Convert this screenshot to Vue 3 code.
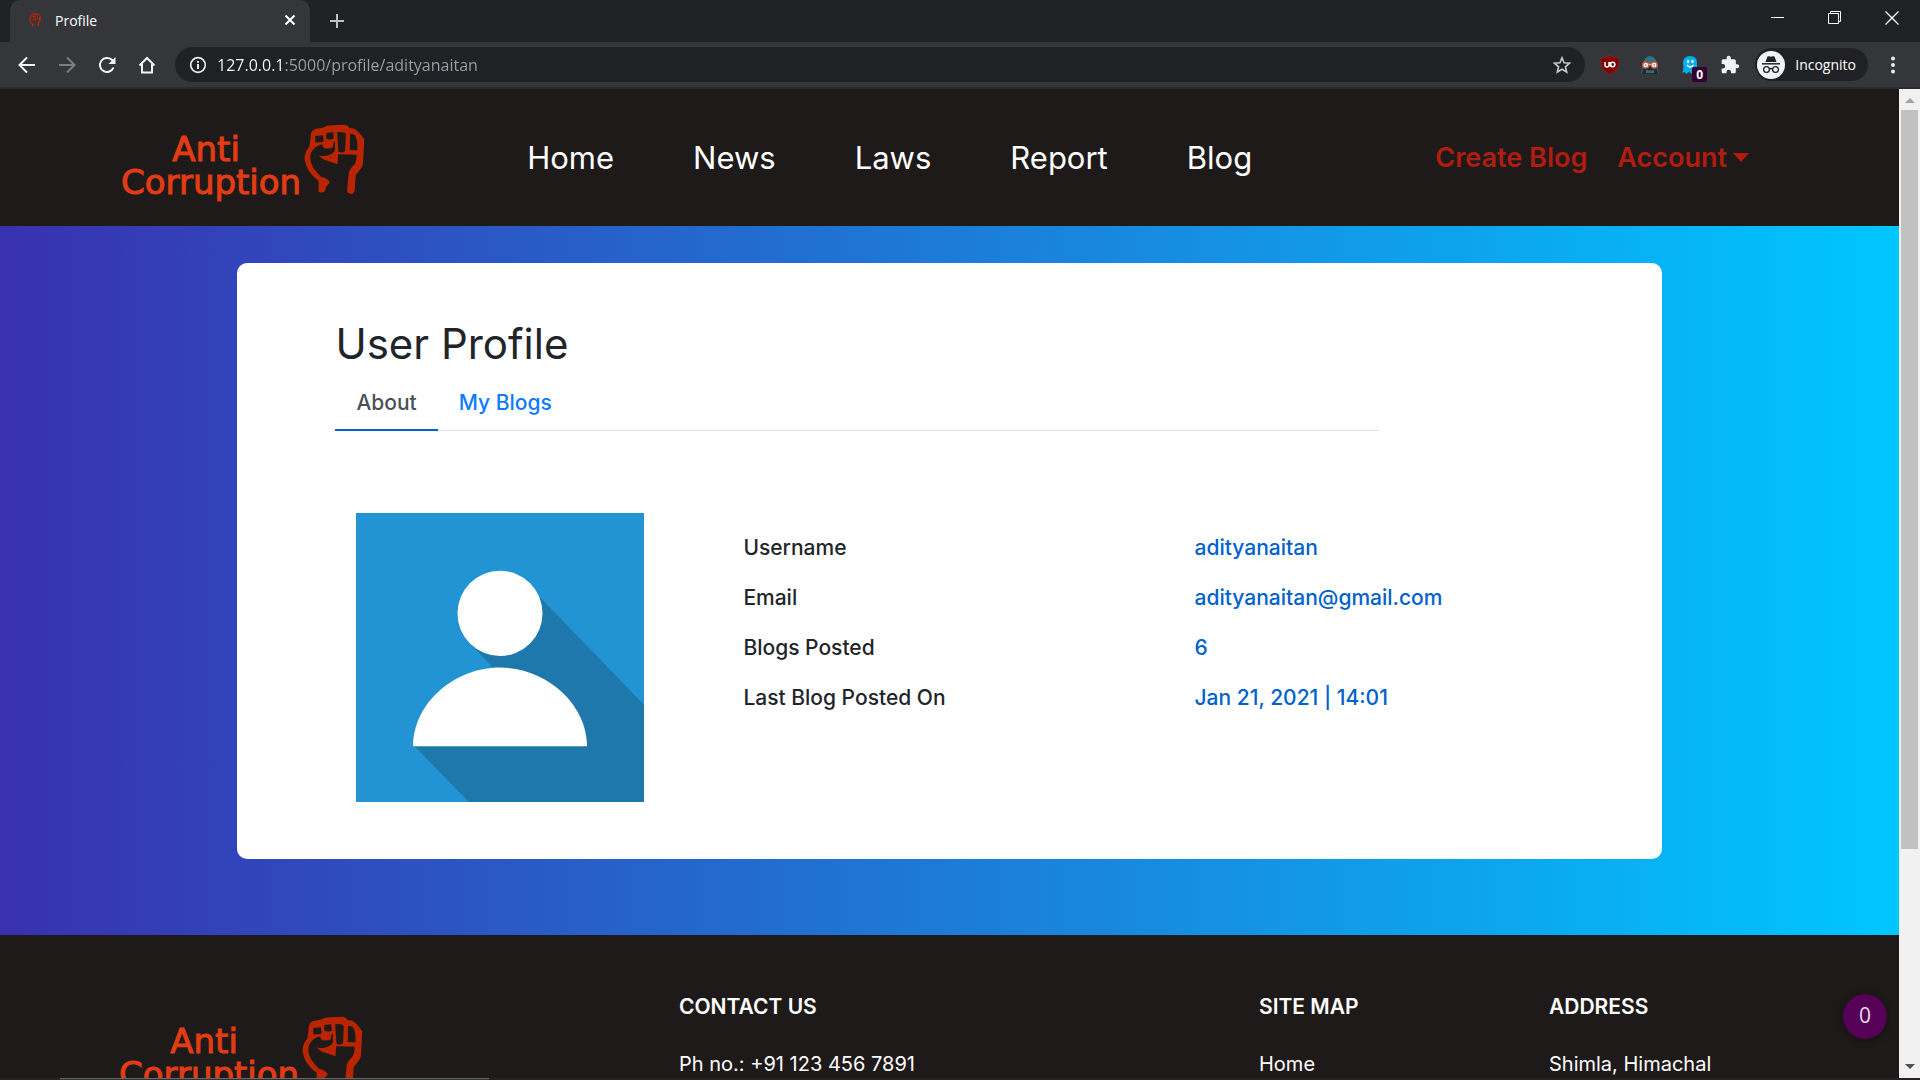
<script setup>
import { ref, h } from 'vue'

const url = ref('127.0.0.1:5000/profile/adityanaitan')
const links = ['Home', 'News', 'Laws', 'Report', 'Blog']
const details = [
  { label: 'Username', value: 'adityanaitan' },
  { label: 'Email', value: 'adityanaitan@gmail.com' },
  { label: 'Blogs Posted', value: '6' },
  { label: 'Last Blog Posted On', value: 'Jan 21, 2021 | 14:01' },
]
const footerColumns = [
  { title: 'CONTACT US', text: 'Ph no.: +91 123 456 7891' },
  { title: 'SITE MAP', text: 'Home', link: true },
  { title: 'ADDRESS', text: 'Shimla, Himachal' },
]

const Fist = (props) =>
  h('svg', { viewBox: '614 72 184 214', 'aria-hidden': 'true' }, [
    h('path', {
      fill: '#b82500',
      'fill-rule': 'evenodd',
      d: 'M634 110 Q634 90 650 86 L670 83 Q684 75 700 76 L738 74 Q746 75 752 84 L766 86 Q778 92 796 118 L792 192 Q790 204 770 226 L767 272 Q765 283 755 283 Q744 282 744 272 L749 218 Q752 208 766 194 Q772 188 773 165 L717 163 L715 193 L684 183 Q664 176 659 166 Q668 170 682 168 Q702 162 707 152 L707 124 Q702 128 702 134 Q704 144 694 145 L676 146 Q669 142 669 134 Q652 136 641 150 Q632 160 633 174 Q635 196 645 208 Q654 220 666 232 Q684 234 692 248 L680 262 L678 274 Q668 282 658 276 L658 243 Q638 230 625 208 Q614 184 616 168 Q618 154 630 140 Z ' +
        'M648 108 L648 128 L671 126 L673 119 L671 106 Z M682 99 L680 114 Q690 122 704 116 L702 97 Z M714 97 L718 155 Q728 162 738 153 L740 102 Q734 93 714 97 Z M753 101 L752 150 L775 151 Q777 116 766 104 Z',
    }),
  ])

const Logo = () =>
  h('span', { class: 'logo' }, [
    h('span', { class: 'logo-text' }, [h('span', 'Anti'), h('span', 'Corruption')]),
    h(Fist, { class: 'logo-fist' }),
  ])
</script>

<template>
  <div class="browser">
    <header class="tabstrip">
      <div class="tab">
        <Fist class="favicon" />
        <span class="tab-title">Profile</span>
        <button class="plain tab-close" aria-label="Close tab">
          <svg width="12" height="12" viewBox="0 0 12 12"><path d="M1.500 1.500L10.500 10.500M10.500 1.500L1.500 10.500" stroke="#fff" stroke-width="2" /></svg>
        </button>
      </div>
      <button class="plain new-tab" aria-label="New tab">
        <svg width="16" height="16" viewBox="0 0 16 16"><path d="M8 1V15M1 8H15" stroke="#bdc1c6" stroke-width="2" /></svg>
      </button>
      <div class="window-controls">
        <button class="plain" aria-label="Minimize">
          <svg width="14" height="14" viewBox="0 0 14 14"><path d="M0 6.500H13" stroke="#fff" /></svg>
        </button>
        <button class="plain" aria-label="Restore">
          <svg width="14" height="14" viewBox="0 0 14 14" fill="none" stroke="#fff"><path d="M.5 2.500H10.500V12.500H.5ZM2.500 2.500V.5H12.500V10.500H10.500" /></svg>
        </button>
        <button class="plain" aria-label="Close">
          <svg width="14" height="14" viewBox="0 0 14 14"><path d="M.5 .5L13.500 13.500M13.500 .5L.5 13.500" stroke="#fff" stroke-width="1.300" /></svg>
        </button>
      </div>
    </header>

    <div class="toolbar">
      <div class="tool-group nav-tools">
        <button class="plain tool" aria-label="Back">
          <svg width="18" height="18" viewBox="0 0 18 18" fill="none" stroke="#f1f3f4" stroke-width="2"><path d="M17 9H2M9 1.500L1.500 9L9 16.500" /></svg>
        </button>
        <button class="plain tool" aria-label="Forward">
          <svg width="18" height="18" viewBox="0 0 18 18" fill="none" stroke="#7b7d80" stroke-width="2"><path d="M1 9H16M9 1.500L16.500 9L9 16.500" /></svg>
        </button>
        <button class="plain tool" aria-label="Reload">
          <svg width="18" height="18" viewBox="0 0 18 18"><path d="M15.500 11.500A7 7 0 1 1 13.500 3.600L15 5" fill="none" stroke="#f1f3f4" stroke-width="2" /><path d="M17.500 1V8H10.500Z" fill="#f1f3f4" /></svg>
        </button>
        <button class="plain tool" aria-label="Home page">
          <svg width="18" height="18" viewBox="0 0 18 18" fill="none" stroke="#f1f3f4" stroke-width="2"><path d="M1.500 9.500L9 2L16.500 9.500M4 8V16.500H14V8" /></svg>
        </button>
      </div>
      <div class="omnibox">
        <svg width="18" height="18" viewBox="0 0 18 18"><circle cx="9" cy="9" r="7.300" fill="none" stroke="#e8eaed" stroke-width="1.700" /><path d="M9 8V13M9 5V6.800" stroke="#e8eaed" stroke-width="2" /></svg>
        <input v-model="url" class="url" type="text" aria-label="Address" spellcheck="false" />
        <button class="plain" aria-label="Bookmark this page">
          <svg width="18" height="18" viewBox="0 0 18 18" fill="none" stroke="#c6c8cb" stroke-width="1.600"><path d="M9 1.800L11.100 6.800L16.500 7.200L12.400 10.800L13.700 16L9 13.200L4.300 16L5.600 10.800L1.500 7.200L6.900 6.800Z" /></svg>
        </button>
      </div>
      <div class="tool-group">
        <button class="plain tool" aria-label="uBlock">
          <svg width="20" height="20" viewBox="0 0 20 20"><path d="M10 .5C7 2.500 4 3 1 3C1 11 2 15.500 10 19.500C18 15.500 19 11 19 3C16 3 13 2.500 10 .5Z" fill="#800000" stroke="#a22" stroke-width=".6" /><path d="M5 7V10Q5 12 7 12Q9 12 9 10V7M10.500 7V12" fill="none" stroke="#fff" stroke-width="1.500" /><circle cx="12.700" cy="9.500" r="2.200" fill="none" stroke="#fff" stroke-width="1.500" /></svg>
        </button>
        <button class="plain tool" aria-label="Mask">
          <svg width="20" height="20" viewBox="0 0 20 20"><path d="M0 19Q4 15 3 9Q4 1 10 1Q16 1 17 9Q16 15 20 19Z" fill="#1b2c38" /><path d="M3 8Q5 1 10 1Q15 1 17 8L13 6L10 9L7 6Z" fill="#2b7586" /><path d="M3 9Q3 16 1 19M17 9Q17 16 19 19" stroke="#2b6272" fill="none" /><circle cx="5.800" cy="10" r="3" fill="#fff" stroke="#d4573d" stroke-width="1.500" /><circle cx="14.200" cy="10" r="3" fill="#fff" stroke="#d4573d" stroke-width="1.500" /><path d="M5 10H6.600M13.400 10H15" stroke="#444" /><path d="M8.500 9.500H11.500" stroke="#e9a798" stroke-width="1.500" /><path d="M7 15V18M9 15.500V18M11 15.500V18M13 15V18" stroke="#7d98a5" /></svg>
        </button>
        <button class="plain tool ghost" aria-label="Tracker blocker">
          <svg width="18" height="20" viewBox="0 0 18 20"><path d="M2 8Q2 1 9 1Q16 1 16 8V18L13 16L11 19L8 17L5 19L4 17L1 18Q3 14 2 8Z" fill="#00aef0" /><ellipse cx="7" cy="6.500" rx="1.200" ry="1.700" fill="#fff" /><ellipse cx="11.500" cy="6.500" rx="1.200" ry="1.700" fill="#fff" /><path d="M6 10Q9.200 14 12.500 10" fill="none" stroke="#fff" stroke-width="1.300" /></svg>
          <span class="badge">0</span>
        </button>
        <button class="plain tool" aria-label="Extensions">
          <svg width="20" height="20" viewBox="0 0 24 24"><path fill="#f1f3f4" d="M20.500 11H19V7c0-1.100-.9-2-2-2h-4V3.500a2.500 2.500 0 0 0-5 0V5H4c-1.100 0-2 .9-2 2v3.800h1.500a2.700 2.700 0 0 1 0 5.400H2V20c0 1.100.9 2 2 2h3.800v-1.500a2.700 2.700 0 0 1 5.400 0V22H17c1.100 0 2-.9 2-2v-4h1.500a2.500 2.500 0 0 0 0-5z" /></svg>
        </button>
      </div>
      <button class="plain incognito">
        <svg width="28" height="28" viewBox="0 0 28 28"><circle cx="14" cy="14" r="14" fill="#f1f3f4" /><path d="M8.500 11L10.500 5.500Q11 5 12 5.300Q14 6 16 5.300Q17 5 17.500 5.500L19.500 11Z" fill="#202124" /><path d="M5 12.800H23" stroke="#202124" stroke-width="1.500" /><g fill="none" stroke="#202124" stroke-width="1.300"><circle cx="9.500" cy="18.500" r="2.900" /><circle cx="18.500" cy="18.500" r="2.900" /><path d="M12.400 18Q14 17 15.600 18" /></g></svg>
        <span>Incognito</span>
      </button>
      <button class="plain tool" aria-label="Menu">
        <svg width="4" height="18" viewBox="0 0 4 18" fill="#e8eaed"><circle cx="2" cy="2.500" r="2" /><circle cx="2" cy="9" r="2" /><circle cx="2" cy="15.500" r="2" /></svg>
      </button>
    </div>

    <div class="viewport">
      <div class="page">
        <nav class="navbar">
          <a href="#" class="brand" aria-label="Anti Corruption"><Logo /></a>
          <ul class="nav-links">
            <li v-for="link in links" :key="link"><a href="#">{{ link }}</a></li>
          </ul>
          <div class="nav-actions">
            <a href="#">Create Blog</a>
            <button class="plain account">Account<span class="caret"></span></button>
          </div>
        </nav>

        <main class="backdrop">
          <section class="card">
            <h1>User Profile</h1>
            <div class="tabs">
              <a href="#about" class="active">About</a>
              <a href="#blogs">My Blogs</a>
            </div>
            <div class="profile">
              <svg class="avatar" viewBox="0 0 288 288" preserveAspectRatio="none" role="img" aria-label="User avatar">
                <rect width="288" height="288" fill="#2394d3" />
                <path d="M184 84L288 191V288H113L58 232L140 157L115 131Z" fill="#1e78ab" />
                <path d="M57 232L100 170L139 155L115 131L90 160Z" fill="#2394d3" />
                <path d="M115 131L139 156H160V131Z" fill="#1e78ab" />
                <circle cx="144" cy="100" r="42.500" fill="#fff" />
                <path d="M57 232.500C57 190 98 154 144 154C190 154 231 190 231 232.500Z" fill="#fff" />
              </svg>
              <table class="details">
                <tbody>
                  <tr v-for="row in details" :key="row.label">
                    <th scope="row">{{ row.label }}</th>
                    <td>{{ row.value }}</td>
                  </tr>
                </tbody>
              </table>
            </div>
          </section>
        </main>

        <footer class="footer">
          <div class="footer-brand"><Logo /></div>
          <div v-for="col in footerColumns" :key="col.title">
            <h2>{{ col.title }}</h2>
            <a v-if="col.link" href="#">{{ col.text }}</a>
            <p v-else>{{ col.text }}</p>
          </div>
        </footer>
        <div class="counter">0</div>
      </div>
      <div class="scrollbar" aria-hidden="true">
        <span class="arrow up"></span>
        <div class="track"><div class="thumb"></div></div>
        <span class="arrow down"></span>
      </div>
    </div>
    <div class="shelf"><div class="shelf-edge"></div></div>
  </div>
</template>

<style>
body {
  margin: 0;
}
.logo {
  display: flex;
  align-items: flex-start;
  gap: 3px;
}
.logo-text {
  display: flex;
  flex-direction: column;
  align-items: center;
  padding-top: 9px;
  font: 34px/33px "DejaVu Sans", sans-serif;
  color: #e23c14;
  -webkit-text-stroke: 1px #e23c14;
}
.logo-text span:first-child {
  padding-right: 10px;
}
.logo-fist {
  width: 61px;
  height: 71px;
}
</style>

<style scoped>
.browser {
  display: flex;
  flex-direction: column;
  height: 100vh;
  overflow: hidden;
  background: #202124;
  font-family: "Open Sans", sans-serif;
}
.plain {
  display: flex;
  align-items: center;
  justify-content: center;
  padding: 0;
  border: 0;
  background: none;
  color: inherit;
  font: inherit;
}
a {
  color: inherit;
  text-decoration: none;
}
.tabstrip {
  display: flex;
  flex: none;
  height: 42px;
  padding-left: 10px;
}
.tab {
  display: flex;
  align-items: center;
  box-sizing: border-box;
  width: 300px;
  padding: 0 14px 2px 19px;
  border-radius: 10px 10px 0 0;
  background: #35363a;
  color: #fff;
  font-size: 14px;
}
.favicon {
  width: 12px;
  height: 14px;
  margin-right: 14px;
}
.tab-title {
  flex: 1;
}
.new-tab {
  width: 54px;
}
.window-controls {
  display: flex;
  margin-left: auto;
}
.window-controls button {
  width: 57px;
  height: 36px;
}
.toolbar {
  display: flex;
  flex: none;
  align-items: center;
  gap: 10px;
  box-sizing: border-box;
  height: 47px;
  padding: 0 12px;
  border-bottom: 2px solid #28292c;
  background: #35363a;
}
.tool-group {
  display: flex;
  gap: 10px;
}
.nav-tools {
  padding-right: 3px;
}
.tool {
  width: 30px;
  height: 30px;
}
.omnibox {
  display: flex;
  flex: 1;
  align-items: center;
  gap: 10px;
  height: 35px;
  padding: 0 14px;
  border-radius: 18px;
  background: #202124;
}
.url {
  flex: 1;
  min-width: 0;
  padding: 0;
  border: 0;
  outline: 0;
  background: linear-gradient(90deg, #fff 67px, #9aa0a6 67px);
  -webkit-background-clip: text;
  background-clip: text;
  color: transparent;
  font: 16px/24px "Open Sans", sans-serif;
}
.ghost {
  position: relative;
}
.badge {
  position: absolute;
  right: -2px;
  bottom: -2px;
  width: 15px;
  border-radius: 2px;
  background: #330033;
  color: #fff;
  font: bold 12px/15px "Open Sans", sans-serif;
  text-align: center;
}
.incognito {
  gap: 10px;
  height: 33px;
  padding: 0 12px 0 2px;
  border-radius: 17px;
  background: #202124;
  color: #fff;
  font-size: 14px;
}
.viewport {
  display: flex;
  flex: 1;
  min-height: 0;
}
.page {
  position: relative;
  display: flex;
  flex: 1;
  flex-direction: column;
  overflow: hidden;
  background: #1e1a19;
  font-family: Inter, sans-serif;
}
.navbar {
  display: flex;
  flex: none;
  align-items: center;
  height: 137px;
  padding: 0 150px 0 121px;
}
.brand {
  padding-top: 8px;
}
.nav-links {
  display: flex;
  gap: 79px;
  margin: 0 0 0 162px;
  padding: 0;
  list-style: none;
  color: #fff;
  font-size: 31px;
}
.nav-actions {
  display: flex;
  gap: 30px;
  margin-left: auto;
  color: #b01c10;
  font-size: 27px;
  font-weight: 600;
}
.account {
  gap: 6px;
}
.caret {
  border: 8px solid transparent;
  border-top: 9px solid #b01c10;
  border-bottom: 0;
}
.backdrop {
  flex: none;
  padding: 37px 0 76px;
  background: linear-gradient(90deg, #3931af, #00c6ff);
}
.card {
  box-sizing: border-box;
  width: 75%;
  margin: 0 auto;
  padding: 57px 98px;
  border-radius: 10px;
  background: #fff;
  color: #212529;
}
h1 {
  margin: 0 0 10px;
  font-size: 42px;
  font-weight: 400;
  line-height: 48px;
}
.tabs {
  display: flex;
  width: 85%;
  border-bottom: 1px solid #dee2e6;
  color: #0d7bff;
  font-size: 21px;
  font-weight: 500;
  line-height: 30px;
}
.tabs a {
  margin-bottom: -1px;
  padding: 10px 21px 11px;
  border-bottom: 2px solid transparent;
}
.tabs .active {
  border-color: #0062cc;
  color: #495057;
}
.profile {
  display: flex;
  align-items: flex-start;
  gap: 99px;
  margin-top: 82px;
  padding-left: 21px;
}
.avatar {
  flex: none;
  width: 288px;
  height: 289px;
}
.details {
  flex: 1;
  margin-top: 10px;
  border-collapse: collapse;
  table-layout: fixed;
  font-size: 21px;
  font-weight: 500;
  line-height: 50px;
}
.details th {
  width: 55%;
  padding: 0;
  font-weight: 500;
  text-align: left;
}
.details td {
  padding: 0;
  color: #0062cc;
}
.footer {
  display: grid;
  flex: none;
  grid-template-columns: 4fr 4fr 2fr 2fr;
  padding: 57px 60px 57px 99px;
  color: #fff;
  font-size: 20px;
  line-height: 30px;
}
.footer-brand {
  padding: 24px 0 0 20px;
}
.footer h2 {
  margin: 0 0 27px;
  font-size: 21px;
  font-weight: 600;
}
.footer p {
  margin: 0;
}
.counter {
  position: absolute;
  right: 12px;
  bottom: 39px;
  width: 44px;
  height: 45px;
  border-radius: 50%;
  background: #570057;
  box-shadow: 0 1px 8px rgba(0, 0, 0, 0.4);
  color: #e8dce8;
  font: 21px/42px "Open Sans", sans-serif;
  text-align: center;
}
.scrollbar {
  display: flex;
  flex: none;
  flex-direction: column;
  align-items: center;
  box-sizing: border-box;
  width: 21px;
  padding: 9px 0;
  background: #f1f1f1;
}
.arrow {
  border: 5px solid transparent;
}
.up {
  border-top: 0;
  border-bottom-color: #a3a3a3;
}
.down {
  border-bottom: 0;
  border-top-color: #505050;
}
.track {
  flex: 1;
  width: 17px;
  margin: 7px 0;
}
.thumb {
  height: 78%;
  background: #c1c1c1;
}
.shelf {
  flex: none;
  height: 2px;
  padding-left: 60px;
  background: #252122;
}
.shelf-edge {
  width: 429px;
  height: 1px;
  border-bottom: 1px solid #333;
  background: #666;
}
</style>
